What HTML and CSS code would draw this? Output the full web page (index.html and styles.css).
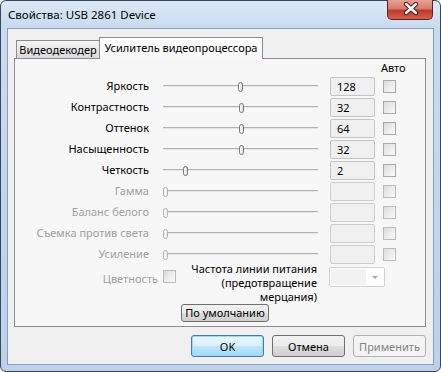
FILE: index.html
```html
<!DOCTYPE html>
<html>
<head>
<title>Свойства: USB 2861 Device</title>
<link rel="stylesheet" href="styles.css">
</head>
<body>

<div class="window">
  <div class="titlebar">
    <span class="title">Свойства: USB 2861 Device</span>
    <div class="close">
      <svg width="44" height="18" viewBox="0 0 44 18">
        <path d="M18 3 L28 12 M28 3 L18 12" stroke="#5a1a14" stroke-width="4.4" stroke-linecap="round"/>
        <path d="M18 3 L28 12 M28 3 L18 12" stroke="#ffffff" stroke-width="2.4" stroke-linecap="round"/>
      </svg>
    </div>
  </div>

  <div class="client">
    <div class="tabs">
      <div class="tab">Видеодекодер</div>
      <div class="tab active">Усилитель видеопроцессора</div>
    </div>

    <div class="panel">
      <div class="head"><span class="auto">Авто</span></div>

      <!-- enabled controls -->
      <div class="row">
        <span class="label">Яркость</span>
        <div class="slider"><span class="thumb" style="left:75px"></span></div>
        <div class="value">128</div>
        <span class="check"></span>
      </div>
      <div class="row">
        <span class="label">Контрастность</span>
        <div class="slider"><span class="thumb" style="left:76px"></span></div>
        <div class="value">32</div>
        <span class="check"></span>
      </div>
      <div class="row">
        <span class="label">Оттенок</span>
        <div class="slider"><span class="thumb" style="left:76px"></span></div>
        <div class="value">64</div>
        <span class="check"></span>
      </div>
      <div class="row">
        <span class="label">Насыщенность</span>
        <div class="slider"><span class="thumb" style="left:76px"></span></div>
        <div class="value">32</div>
        <span class="check"></span>
      </div>
      <div class="row">
        <span class="label">Четкость</span>
        <div class="slider"><span class="thumb" style="left:20px"></span></div>
        <div class="value">2</div>
        <span class="check"></span>
      </div>

      <!-- disabled controls -->
      <div class="row disabled">
        <span class="label">Гамма</span>
        <div class="slider"><span class="thumb" style="left:0px"></span></div>
        <div class="value"></div>
        <span class="check"></span>
      </div>
      <div class="row disabled">
        <span class="label">Баланс белого</span>
        <div class="slider"><span class="thumb" style="left:0px"></span></div>
        <div class="value"></div>
        <span class="check"></span>
      </div>
      <div class="row disabled">
        <span class="label">Съемка против света</span>
        <div class="slider"><span class="thumb" style="left:0px"></span></div>
        <div class="value"></div>
        <span class="check"></span>
      </div>
      <div class="row disabled">
        <span class="label">Усиление</span>
        <div class="slider"><span class="thumb" style="left:0px"></span></div>
        <div class="value"></div>
        <span class="check"></span>
      </div>

      <div class="extra">
        <span class="color-label">Цветность</span>
        <span class="check"></span>
        <div class="freq">
          <span>Частота линии питания</span>
          <span>(предотвращение</span>
          <span>мерцания)</span>
        </div>
        <div class="combo"><span class="combo-field"></span><span class="arrow"></span></div>
      </div>

      <div class="defaults">
        <button class="btn small">По умолчанию</button>
      </div>
    </div>

    <div class="actions">
      <button class="btn default">OK</button>
      <button class="btn">Отмена</button>
      <button class="btn" disabled>Применить</button>
    </div>
  </div>
</div>

</body>
</html>
```

FILE: styles.css
```css
body {
  margin: 0;
  font-family: "Segoe UI", "Noto Sans", sans-serif;
  font-size: 11px;
  color: #000;
  white-space: nowrap;
}

/* Window frame */
.window {
  width: 441px;
  height: 372px;
  box-sizing: border-box;
  border: 1px solid #3b4656;
  border-radius: 6px;
  padding: 0 6px 6px 6px;
  display: flex;
  flex-direction: column;
  background: linear-gradient(#dce8f6, #c9dbf0 27px, #bad1ec);
}

.titlebar {
  height: 27px;
  display: flex;
  justify-content: space-between;
}

.title {
  padding-left: 1px;
  font-size: 11.5px;
  line-height: 28px;
}

.close {
  width: 46px;
  height: 20px;
  box-sizing: border-box;
  margin-top: -1px;
  margin-right: 1px;
  border: 1px solid #5d2119;
  border-top: none;
  border-radius: 0 0 5px 5px;
  background: linear-gradient(#e4a395, #d67b6b 45%, #c0392b 55%, #d2604c);
  display: flex;
  align-items: center;
  justify-content: center;
}

/* Client area */
.client {
  flex: 1;
  border: 1px solid #8a9db7;
  background: #f0f0f0;
  padding: 8px 7px 0 6px;
  display: flex;
  flex-direction: column;
}

.tabs {
  display: flex;
  align-items: flex-end;
  height: 21px;
  padding-left: 2px;
}

.tab {
  box-sizing: border-box;
  height: 18px;
  width: 83px;
  border: 1px solid #898c95;
  border-bottom: none;
  border-right: none;
  text-align: center;
  line-height: 17px;
  background: linear-gradient(#f3f3f3, #e8e8e8 50%, #dadada);
}

.tab.active {
  position: relative;
  z-index: 1;
  width: 164px;
  height: 22px;
  margin-bottom: -1px;
  border-right: 1px solid #898c95;
  line-height: 19px;
  background: linear-gradient(#ffffff, #f7f7f7);
}

.panel {
  box-sizing: border-box;
  height: 269px;
  border: 1px solid #898c95;
  background: #f7f7f7;
}

.head {
  height: 18px;
}

.auto {
  display: inline-block;
  margin-left: 366px;
  line-height: 18px;
}

/* Control rows */
.row {
  display: flex;
  height: 21px;
}

.label {
  width: 134px;
  text-align: right;
  line-height: 18px;
}

.slider {
  position: relative;
  width: 155px;
  height: 19px;
  margin-left: 14px;
}

.slider::before {
  content: "";
  position: absolute;
  left: 0;
  right: 0;
  top: 8px;
  border-top: 1px solid #b3b3b3;
  border-bottom: 1px solid #e6e6e6;
}

.thumb {
  position: absolute;
  top: 5px;
  width: 5px;
  height: 10px;
  box-sizing: border-box;
  border: 1px solid #777;
  border-radius: 3px;
  background: linear-gradient(90deg, #fff, #d8d8d8);
}

.value {
  box-sizing: border-box;
  width: 45px;
  height: 19px;
  margin-left: 12px;
  padding-left: 6px;
  border: 1px solid #c4c4c4;
  border-radius: 2px;
  line-height: 17px;
  background: #f0f0f0;
}

.check {
  box-sizing: border-box;
  width: 13px;
  height: 13px;
  margin-left: 8px;
  margin-top: 3px;
  border: 1px solid #a9a9a9;
  background: linear-gradient(135deg, #dcdcdc, #fbfbfb);
}

.row.disabled .label {
  color: #a0a0a0;
}

.row.disabled .thumb {
  border-color: #b4b4b4;
  background: #f2f2f2;
}

.row.disabled .value {
  border-color: #cdcdcd;
}

.row.disabled .check {
  border-color: #bcbcbc;
}

/* Colour / power line frequency */
.extra {
  display: flex;
  margin-top: -3px;
  height: 39px;
}

.color-label {
  width: 143px;
  text-align: right;
  color: #a0a0a0;
  line-height: 14px;
  margin-top: 9px;
}

.extra .check {
  margin-left: 5px;
  margin-top: 7px;
  border-color: #bcbcbc;
}

.freq {
  width: 140px;
  margin-left: 1px;
  margin-top: -1px;
  display: flex;
  flex-direction: column;
  align-items: flex-end;
}

.freq span {
  display: block;
  height: 14px;
  line-height: 14px;
}

.combo {
  box-sizing: border-box;
  width: 56px;
  height: 20px;
  margin-left: 12px;
  margin-top: 4px;
  border: 1px solid #d2d2d2;
  border-radius: 2px;
  background: #fff;
  display: flex;
  align-items: center;
  padding: 1px;
}

.combo-field {
  width: 35px;
  height: 16px;
  background: #f2f2f2;
}

.arrow {
  margin-left: 6px;
  border-left: 3px solid transparent;
  border-right: 3px solid transparent;
  border-top: 3px solid #a8a8a8;
}

.defaults {
  padding-left: 166px;
  margin-top: 2px;
}

/* Buttons */
.btn {
  box-sizing: border-box;
  width: 73px;
  height: 22px;
  padding: 0;
  font-family: inherit;
  font-size: 11px;
  color: #000;
  border: 1px solid #707070;
  border-radius: 3px;
  background: linear-gradient(#f2f2f2, #ebebeb 50%, #dddddd 51%, #cfcfcf);
}

.btn.small {
  width: 88px;
  height: 18px;
  line-height: 14px;
}

.btn.default {
  border-color: #3c7fb1;
  box-shadow: inset 0 0 0 1px #9fd8f7;
  background: linear-gradient(#eaf6fd, #d9f0fc 50%, #bee6fd 51%, #a7d9f5);
}

.btn:disabled {
  color: #838383;
  border-color: #adb2b5;
  background: #f4f4f4;
}

.actions {
  display: flex;
  justify-content: flex-end;
  gap: 8px;
  margin-top: 8px;
}
```
